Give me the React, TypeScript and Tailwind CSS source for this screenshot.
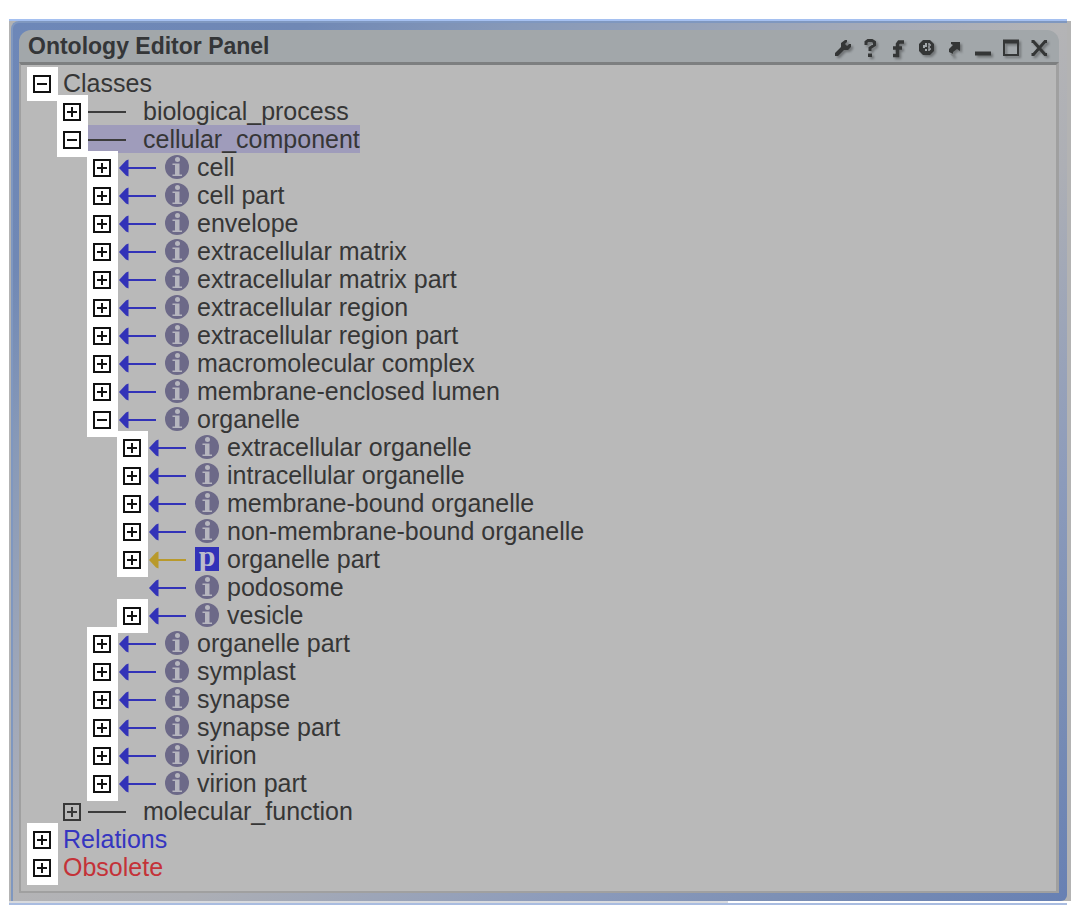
import React from "react";

type Kind = "plain" | "line" | "isa" | "part";
type Node = {
  label: string;
  level: number;
  kind: Kind;
  toggle?: "plus" | "minus";
  dim?: boolean;
  selected?: boolean;
  color?: string;
};

const leaf = (label: string, level: number): Node => ({ label, level, kind: "isa", toggle: "plus" });

const nodes: Node[] = [
  { label: "Classes", level: 0, kind: "plain", toggle: "minus" },
  { label: "biological_process", level: 1, kind: "line", toggle: "plus" },
  { label: "cellular_component", level: 1, kind: "line", toggle: "minus", selected: true },
  leaf("cell", 2),
  leaf("cell part", 2),
  leaf("envelope", 2),
  leaf("extracellular matrix", 2),
  leaf("extracellular matrix part", 2),
  leaf("extracellular region", 2),
  leaf("extracellular region part", 2),
  leaf("macromolecular complex", 2),
  leaf("membrane-enclosed lumen", 2),
  { label: "organelle", level: 2, kind: "isa", toggle: "minus" },
  leaf("extracellular organelle", 3),
  leaf("intracellular organelle", 3),
  leaf("membrane-bound organelle", 3),
  leaf("non-membrane-bound organelle", 3),
  { label: "organelle part", level: 3, kind: "part", toggle: "plus" },
  { label: "podosome", level: 3, kind: "isa" },
  leaf("vesicle", 3),
  leaf("organelle part", 2),
  leaf("symplast", 2),
  leaf("synapse", 2),
  leaf("synapse part", 2),
  leaf("virion", 2),
  leaf("virion part", 2),
  { label: "molecular_function", level: 1, kind: "line", toggle: "plus", dim: true },
  { label: "Relations", level: 0, kind: "plain", toggle: "plus", color: "text-[#3535c0]" },
  { label: "Obsolete", level: 0, kind: "plain", toggle: "plus", color: "text-[#c43238]" },
];

const indents = ["pl-0", "pl-[30px]", "pl-[60px]", "pl-[90px]"];

function Toggle({ node }: { node: Node }) {
  if (!node.toggle) return <span className="w-[31px] shrink-0" />;
  const stroke = node.dim ? "#383838" : "#111111";
  return (
    <button
      type="button"
      aria-label={(node.toggle === "plus" ? "Expand " : "Collapse ") + node.label}
      className={"-mt-0.5 -mb-1 h-[34px] w-[31px] shrink-0 pl-1.5 " + (node.dim ? "" : "bg-white")}
    >
      <svg width="18" height="18" viewBox="0 0 18 18" fill="none" stroke={stroke} strokeWidth="2">
        <rect x="1" y="1" width="16" height="16" />
        <path d={node.toggle === "plus" ? "M4 9H14M9 4V14" : "M4 9H14"} />
      </svg>
    </button>
  );
}

function Link({ kind }: { kind: Kind }) {
  if (kind === "line")
    return (
      <svg className="mt-0.5 mr-4 shrink-0" width="39" height="10" viewBox="0 0 39 10">
        <path d="M0 5H38" stroke="#3c3c3c" strokeWidth="2" />
      </svg>
    );
  const color = kind === "part" ? "#b99a2c" : "#3232b8";
  return (
    <svg className="mt-0.5 mr-2 shrink-0" width="39" height="18" viewBox="0 0 39 18">
      <path d="M10 9H38" stroke={color} strokeWidth="2" />
      <path d="M1 9L8 1.500L10.500 0.500V17.500L8 16.500Z" fill={color} />
    </svg>
  );
}

function Badge({ kind }: { kind: Kind }) {
  if (kind === "part")
    return (
      <span className="mr-2 flex size-6 shrink-0 items-center justify-center bg-[#3232b8] pb-1.5 font-['Liberation_Serif',serif] text-3xl leading-6 font-bold text-[#bcbccb]">
        p
      </span>
    );
  return (
    <svg className="mr-2 shrink-0" width="24" height="24" viewBox="0 0 24 24">
      <circle cx="12" cy="12" r="12" fill="#6c6988" />
      <circle cx="12.500" cy="4.500" r="2.500" fill="#b6b6bf" />
      <path d="M7.500 8.500H14.500V19.500H17V21H7.500V19.500H10V10H7.500Z" fill="#b6b6bf" />
    </svg>
  );
}

function Row({ node }: { node: Node }) {
  return (
    <li className={"flex h-7 items-start " + indents[node.level]}>
      <Toggle node={node} />
      <span className={"flex h-7 items-center " + (node.selected ? "bg-[#9f9cbb]" : "")}>
        {node.kind === "plain" ? <span className="w-[5px]" /> : <Link kind={node.kind} />}
        {(node.kind === "isa" || node.kind === "part") && <Badge kind={node.kind} />}
        <span className={"whitespace-nowrap " + (node.color ?? "text-[#363636]")}>{node.label}</span>
      </span>
    </li>
  );
}

const tools: { name: string; art: React.ReactNode }[] = [
  {
    name: "Configure",
    art: <path d="M1 14L7 8L7 4L11 1H13V3L11 5L13 7L15 5H17V8L14 11H10L4 17H1Z" fill="currentColor" />,
  },
  {
    name: "Help",
    art: (
      <g fill="none" stroke="currentColor" strokeWidth="3">
        <path d="M4 6V3L6 1.500H10L12.500 3V6L8 9V12" />
        <path d="M8 14.500V18" strokeWidth="4" />
      </g>
    ),
  },
  {
    name: "Float",
    art: <path d="M7.500 18V5L9 3H14M3 9H12M3 16.500H9" fill="none" stroke="currentColor" strokeWidth="3.500" />,
  },
  {
    name: "Dock",
    art: (
      <g>
        <path d="M5 1H12L16 5V12L12 16H5L1 12V5Z" fill="currentColor" />
        <path d="M9 4H7V6H5V9H7V12H9V10H7V8H9Z" fill="#a2a7aa" />
        <path d="M11 4V6H13M11 12V10H13M10 8H12" stroke="#a2a7aa" strokeWidth="1.500" fill="none" />
      </g>
    ),
  },
  {
    name: "Detach",
    art: (
      <g>
        <path d="M5 3H14V12L11 10L7 13V15L3 13V10L7 6L5 5Z" fill="currentColor" />
        <path d="M5 15L8 17" stroke="#7e8284" strokeWidth="2" />
      </g>
    ),
  },
  { name: "Minimize", art: <path d="M1 14.500H17" stroke="currentColor" strokeWidth="4" /> },
  {
    name: "Maximize",
    art: (
      <g fill="none" stroke="currentColor">
        <rect x="2" y="2" width="14" height="14" strokeWidth="2" />
        <path d="M1 2.500H17" strokeWidth="4" />
      </g>
    ),
  },
  {
    name: "Close",
    art: <path d="M1.500 2.500H3.500L15 15.500H17M17 2.500H15L3.500 15.500H1.500" stroke="currentColor" strokeWidth="3" fill="none" />,
  },
];

export default function App() {
  return (
    <main className="min-h-screen bg-white pt-[19px] pr-2 pl-[9px] font-['Liberation_Sans',Arial,sans-serif]">
      <div className="mr-1 h-0.5 bg-[#a5c0f0]" />
      <div className="bg-[#b3b3b3] pr-1 pl-0.5">
        <section className="rounded-tl-lg rounded-br-md border-t-2 border-l-2 border-[#7f97bf] bg-[linear-gradient(to_bottom_right,#6d87b8_0%,#7088b5_14%,#8799b8_24%,#a6abb8_42%,#b4b4b6_50%,#adafb5_58%,#8c9bbb_76%,#7d90b5_86%,#6780b3_100%)] pt-[7px] pr-2 pb-2 pl-1.5">
          <header className="flex h-8 items-center justify-between rounded-t-xl bg-[#a2a7aa] pr-[11px] pl-[9px]">
            <h1 className="text-[23px] leading-8 font-bold text-[#343638]">Ontology Editor Panel</h1>
            <div className="flex gap-2.5 pt-1">
              {tools.map((t) => (
                <button key={t.name} type="button" aria-label={t.name} className="text-[#343636]">
                  <svg
                    width="18"
                    height="19"
                    viewBox="0 0 18 19"
                    className="overflow-visible drop-shadow-[2px_2px_1px_rgba(0,0,0,0.3)]"
                  >
                    {t.art}
                  </svg>
                </button>
              ))}
            </div>
          </header>
          <div className="border-t-[3px] border-r-[3px] border-b-2 border-l-2 border-t-[#7d7f80] border-r-[#a0a0a0] border-b-[#a0a0a0] border-l-[#a0a0a0] bg-[#b9b9b9] pt-1 pb-2.5 pl-1.5">
            <ul className="text-[25px] leading-7">
              {nodes.map((n, i) => (
                <Row key={i} node={n} />
              ))}
            </ul>
          </div>
        </section>
      </div>
      <div className="mr-1 h-0.5 bg-[linear-gradient(to_right,#d8dade_68%,#ffffff_68%)]" />
      <div className="mr-1 h-0.5 bg-[#a9bce0]" />
    </main>
  );
}
